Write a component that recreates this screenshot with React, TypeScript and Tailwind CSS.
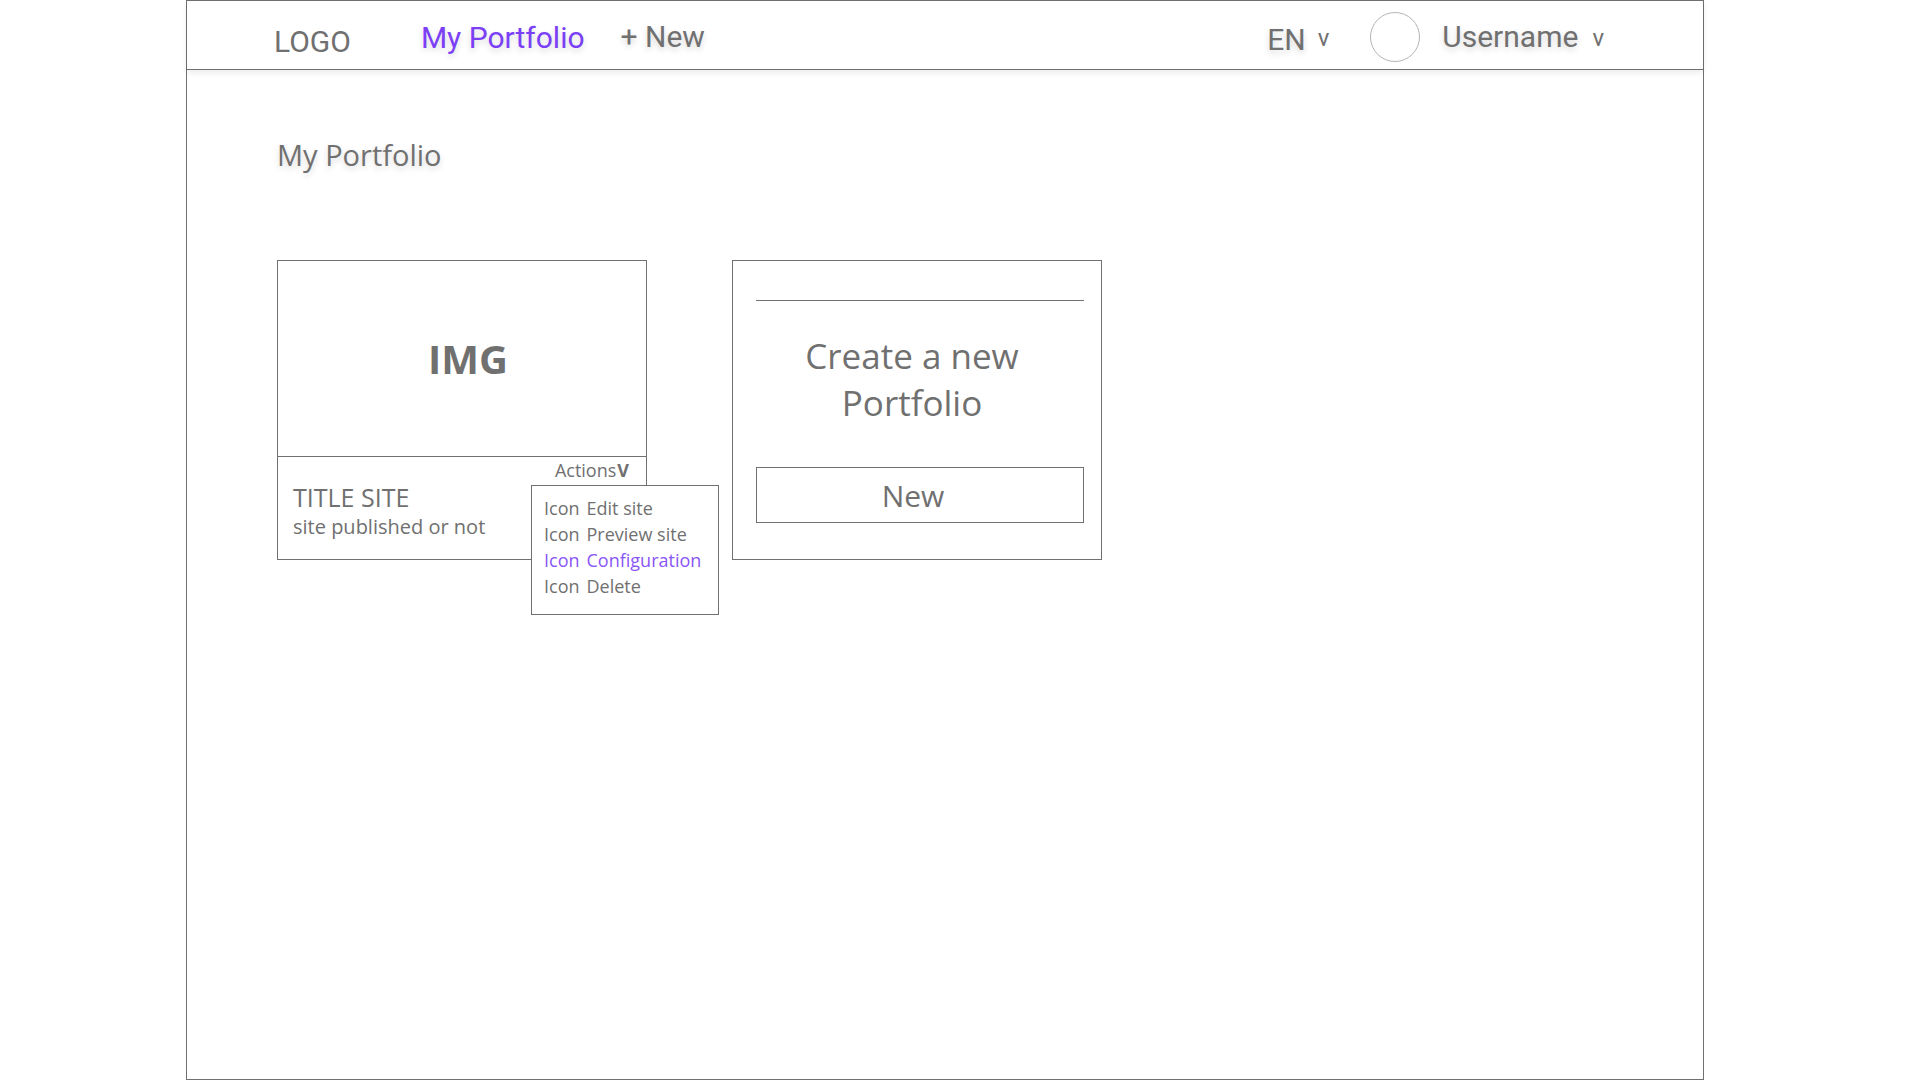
const roboto = 'font-["Roboto",sans-serif]'
const openSans = 'font-["Open_Sans",sans-serif]'
const soft = '[text-shadow:0_3px_6px_rgba(0,0,0,0.16)]'

const menuItems = [
  { label: 'Edit site' },
  { label: 'Preview site' },
  { label: 'Configuration', active: true },
  { label: 'Delete' },
]

function Header() {
  return (
    <header
      className={`flex h-[69px] shrink-0 items-start border-b border-[#707070] bg-white pl-[87px] pr-[99px] text-[#707070] shadow-[0_3px_6px_rgba(0,0,0,0.08)] ${roboto}`}
    >
      <span className="mt-[26px] text-[30px] leading-[30px]">LOGO</span>
      <span className={`ml-[70px] mt-[22px] text-[30px] leading-[30px] text-[#7b3ff6] ${soft}`}>
        My Portfolio
      </span>
      <span className={`ml-[36px] mt-[21px] text-[30px] leading-[30px] ${soft}`}>+ New</span>

      <div className="flex-1" />

      <span className={`mt-[24px] text-[30px] leading-[30px] ${soft}`}>EN</span>
      <span className="ml-[12px] mt-[25px] text-[24px] leading-[24px]">v</span>
      <div className="ml-[41px] mt-[11px] h-[50px] w-[50px] rounded-full border border-[#b4b4b4]" />
      <span className={`ml-[22px] mt-[21px] text-[30px] leading-[30px] ${soft}`}>Username</span>
      <span className="ml-[14px] mt-[25px] text-[24px] leading-[24px]">v</span>
    </header>
  )
}

function SiteCard() {
  return (
    <div className="relative flex h-[300px] w-[370px] flex-col border border-[#707070] bg-white">
      <div className="flex h-[196px] items-center justify-center border-b border-[#707070] pl-3">
        <span className="text-[40px] font-bold leading-none text-[#707070]">IMG</span>
      </div>
      <div className="flex flex-1 flex-col px-[15px]">
        <div className="mt-[2px] flex items-center justify-end pr-[2px] text-[18px] leading-[22px] text-[#707070]">
          Actions
          <span className="ml-[1px] text-[18px] font-bold">V</span>
        </div>
        <div className="text-[25px] leading-[33px] text-[#707070]">TITLE SITE</div>
        <div className="text-[20px] leading-[26px] text-[#707070]">site published or not</div>
      </div>

      <div className="absolute left-[253px] top-[224px] w-[188px] border border-[#707070] bg-white pb-[15px] pl-[12px] pt-[9px]">
        {menuItems.map((item) => (
          <div
            key={item.label}
            className={`flex gap-[7px] text-[18px] leading-[26px] ${item.active ? 'text-[#8a55f7]' : 'text-[#707070]'}`}
          >
            <span>Icon</span>
            <span>{item.label}</span>
          </div>
        ))}
      </div>
    </div>
  )
}

function NewCard() {
  return (
    <div className="flex h-[300px] w-[370px] flex-col border border-[#707070] bg-white pl-[23px] pr-[17px] pt-[39px]">
      <div className="h-px w-full bg-[#707070]" />
      <div className="mt-[31px] pr-[16px] text-center text-[35px] leading-[47px] text-[#707070]">
        Create a new
        <br />
        Portfolio
      </div>
      <button className="mt-[41px] flex h-[56px] w-full items-center justify-center border border-[#707070] pr-[14px] text-[30px] text-[#707070]">
        New
      </button>
    </div>
  )
}

export default function App() {
  return (
    <div className="min-h-screen w-full bg-white">
      <div className="ml-[186px] flex h-[1080px] w-[1518px] flex-col border border-[#707070] bg-white">
        <Header />
        <main className={`flex flex-col pl-[90px] ${openSans}`}>
          <h1 className={`mt-[66px] text-[29px] font-normal leading-[38px] text-[#707070] ${soft}`}>
            My Portfolio
          </h1>
          <div className="mt-[86px] flex gap-[85px]">
            <SiteCard />
            <NewCard />
          </div>
        </main>
      </div>
    </div>
  )
}
